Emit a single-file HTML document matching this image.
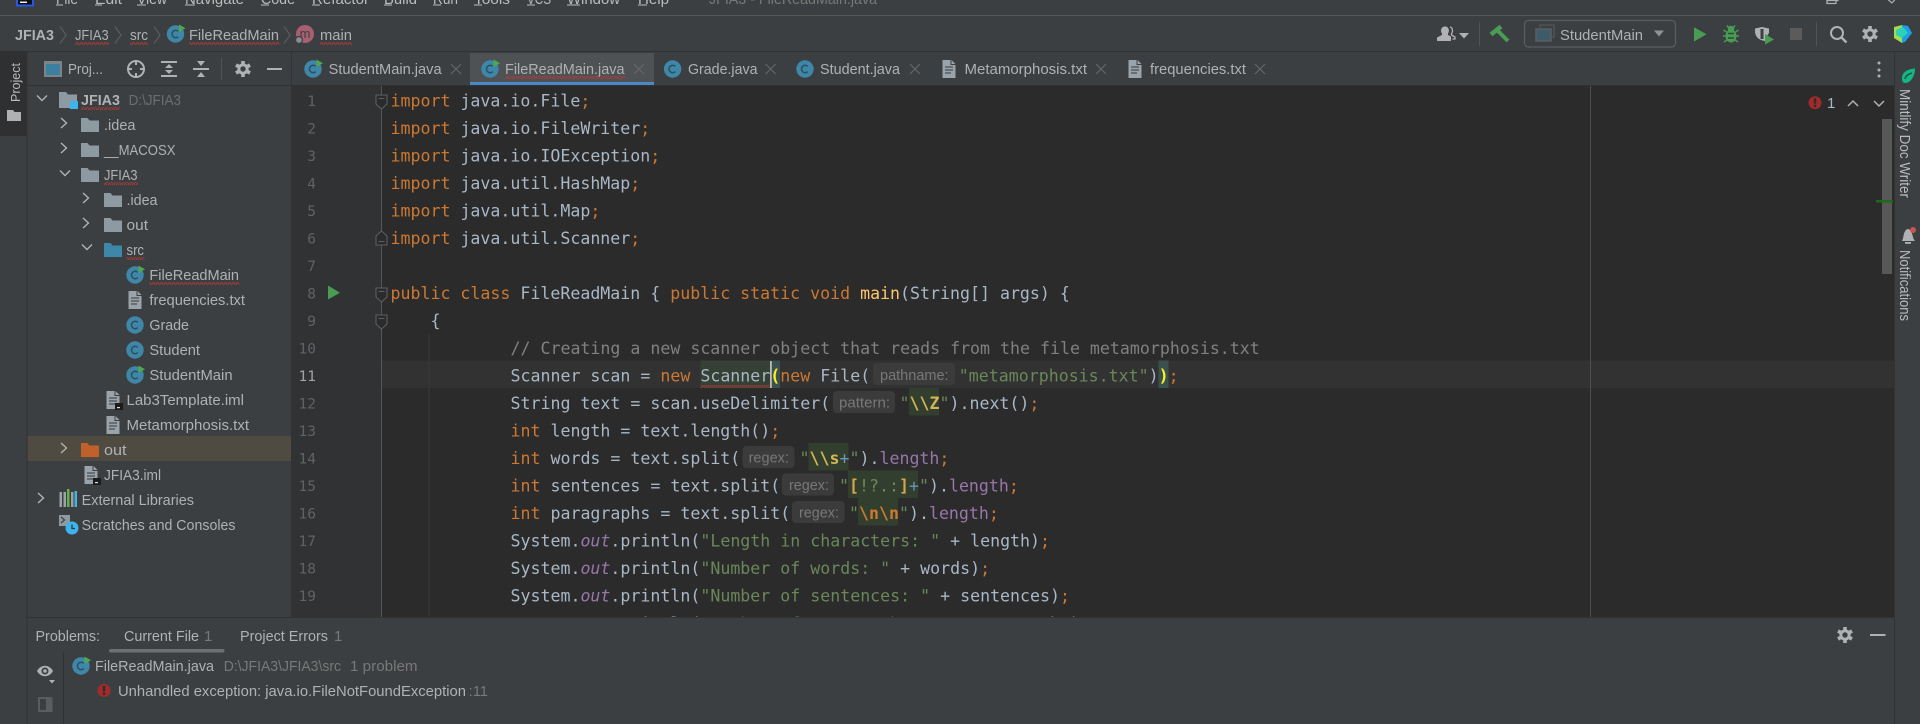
<!DOCTYPE html>
<html><head><meta charset="utf-8"><title>FileReadMain.java</title>
<style>
html,body{margin:0;padding:0;background:#3c3f41;overflow:hidden}
svg{display:block}
text{white-space:pre}
.u{font-family:"Liberation Sans",sans-serif;font-size:15px;fill:#afb1b3}
.b{font-weight:700}
.g{fill:#787878}
.h{font-family:"Liberation Sans",sans-serif;font-size:15px;fill:#787878}
.c{font-family:"DejaVu Sans Mono","Liberation Mono",monospace;font-size:16.6px;fill:#a9b7c6}
.n{font-family:"DejaVu Sans Mono","Liberation Mono",monospace;font-size:14.5px;fill:#606366;text-anchor:end}
.k{fill:#cc7832}.s{fill:#6a8759}.f{fill:#9876aa}.o{fill:#9876aa;font-style:italic}.m{fill:#808080}
.y{fill:#ffef28;font-weight:700}.r1{fill:#d2b655;font-weight:700}.r2{fill:#6897bb}.r3{fill:#d6a44c;font-weight:700}.r4{fill:#cc7832;font-weight:700}.fn{fill:#ffc66d}
</style></head><body>
<svg xmlns="http://www.w3.org/2000/svg" width="1920" height="724" viewBox="0 0 1920 724">
<defs>
<pattern id="w" width="4" height="3" patternUnits="userSpaceOnUse"><path d="M0 2.4L1 .6H2L3 2.4H4" fill="none" stroke="#b23a36" stroke-width=".9"/></pattern>
<clipPath id="ed"><rect x="291" y="86" width="1603" height="531"/></clipPath>
<symbol id="cl" overflow="visible"><circle r="8.7" fill="#3f87a8"/><path d="M2.8-2.6A3.7 3.7 0 1 0 2.8 2.6" fill="none" stroke="#2c4f60" stroke-width="1.5"/></symbol>
<symbol id="rn" overflow="visible"><path d="M3.5-9.5L10-5.8 3.5-2z" fill="#4fa84f"/></symbol>
<symbol id="tx" overflow="visible"><path d="M-6.5-9H1.500V-4H6.500V9H-6.500zM2.500-9L6.500-5H2.500z" fill="#9aa3a9"/><path d="M-4-2H4M-4 1H4M-4 4H2" stroke="#4b5054" stroke-width="1.2"/></symbol>
<symbol id="fd" overflow="visible"><path d="M0 0H6.500L8.500 2.500H18V14H0z" fill="#8e9aa2"/></symbol>
<symbol id="cr" overflow="visible"><path d="M-3-5L2.500 0-3 5" fill="none" stroke="#b0b3b5" stroke-width="1.4"/></symbol>
<symbol id="cd" overflow="visible"><path d="M-5-2.500L0 2.500 5-2.500" fill="none" stroke="#b0b3b5" stroke-width="1.4"/></symbol>
<symbol id="nv" overflow="visible"><path d="M-3-8.500L3 0-3 8.500" fill="none" stroke="#5f6365" stroke-width="1"/></symbol>
<symbol id="x" overflow="visible"><path d="M-5-5L5 5M5-5L-5 5" stroke="#63676a" stroke-width="1.2"/></symbol>
<symbol id="gr" overflow="visible"><path d="M0-8V8M-7-4L7 4M7-4L-7 4" stroke="#afb1b3" stroke-width="3.6"/><circle r="5.600" fill="#afb1b3"/><circle r="2.700" fill="#3c3f41"/></symbol>
<symbol id="fo" overflow="visible"><path d="M-5.500-7H5.500V2L0 7-5.500 2z" fill="#2b2b2b" stroke="#5c5f60" stroke-width="1.100"/><path d="M-3-3.500H3" stroke="#5c5f60" stroke-width="1.100"/></symbol>
<symbol id="fu" overflow="visible"><path d="M-5.500 7H5.500V-2L0-7-5.500-2z" fill="#2b2b2b" stroke="#5c5f60" stroke-width="1.100"/><path d="M-3 3.500H3" stroke="#5c5f60" stroke-width="1.100"/></symbol>
<symbol id="er" overflow="visible"><circle r="6.500" fill="#a32a2a"/><rect x="-1.200" y="-4.500" width="2.400" height="5.500" fill="#2d2d2d"/><rect x="-1.200" y="2" width="2.400" height="2.400" fill="#2d2d2d"/></symbol>
</defs>

<rect width="1920" height="724" fill="#3c3f41"/>

<!-- menu bar -->
<rect x="16" y="0" width="18" height="6.500" fill="#2657e8"/><rect x="18" y="0" width="14" height="4.500" fill="#111"/><rect x="20" y="1.500" width="7" height="1.500" fill="#eee"/>
<g class="menu">
<text class="u" x="56" y="4" textLength="22" lengthAdjust="spacingAndGlyphs" style="fill:#bbb">File</text>
<text class="u" x="95" y="4" textLength="27" lengthAdjust="spacingAndGlyphs" style="fill:#bbb">Edit</text>
<text class="u" x="137" y="4" textLength="30" lengthAdjust="spacingAndGlyphs" style="fill:#bbb">View</text>
<text class="u" x="185" y="4" textLength="59" lengthAdjust="spacingAndGlyphs" style="fill:#bbb">Navigate</text>
<text class="u" x="261" y="4" textLength="34" lengthAdjust="spacingAndGlyphs" style="fill:#bbb">Code</text>
<text class="u" x="312" y="4" textLength="57" lengthAdjust="spacingAndGlyphs" style="fill:#bbb">Refactor</text>
<text class="u" x="384" y="4" textLength="33" lengthAdjust="spacingAndGlyphs" style="fill:#bbb">Build</text>
<text class="u" x="433" y="4" textLength="25" lengthAdjust="spacingAndGlyphs" style="fill:#bbb">Run</text>
<text class="u" x="474" y="4" textLength="36" lengthAdjust="spacingAndGlyphs" style="fill:#bbb">Tools</text>
<text class="u" x="527" y="4" textLength="24" lengthAdjust="spacingAndGlyphs" style="fill:#bbb">VCS</text>
<text class="u" x="567" y="4" textLength="53" lengthAdjust="spacingAndGlyphs" style="fill:#bbb">Window</text>
<text class="u" x="638" y="4" textLength="31" lengthAdjust="spacingAndGlyphs" style="fill:#bbb">Help</text>
<path d="M56 5h7M95 5h7M137 5h9M185 5h10M261 5h8M312 5h8M384 5h8M433 5h8M474 5h8M527 5h8M567 5h13M638 5h9" stroke="#bbb" stroke-width="1"/>
<text class="u g" x="709" y="4" textLength="168" lengthAdjust="spacingAndGlyphs">JFIA3 - FileReadMain.java</text>
</g>
<path d="M1827 4V.5H1838V-3" fill="none" stroke="#afb1b3" stroke-width="1.200"/><rect x="1827" y="-3" width="9" height="6.500" fill="none" stroke="#afb1b3" stroke-width="1.200"/>
<path d="M1885-3L1892 3M1897-3L1892 3" stroke="#afb1b3" stroke-width="1.200" fill="none"/>
<rect x="0" y="15" width="1920" height="1" fill="#54575a"/>

<!-- navigation bar -->
<text class="u b" x="15" y="40" textLength="39" lengthAdjust="spacingAndGlyphs">JFIA3</text>
<use href="#nv" x="63" y="35"/>
<text class="u" x="75" y="40" textLength="33.600" lengthAdjust="spacingAndGlyphs">JFIA3</text>
<rect x="75" y="42" width="34" height="3" fill="url(#w)"/>
<use href="#nv" x="118" y="35"/>
<text class="u" x="130" y="40" textLength="18" lengthAdjust="spacingAndGlyphs">src</text>
<rect x="130" y="42" width="18" height="3" fill="url(#w)"/>
<use href="#nv" x="157" y="35"/>
<use href="#cl" x="175.500" y="34"/><use href="#rn" x="175.500" y="34"/>
<text class="u" x="189" y="40" textLength="90" lengthAdjust="spacingAndGlyphs">FileReadMain</text>
<rect x="189" y="42" width="90" height="3" fill="url(#w)"/>
<use href="#nv" x="287" y="35"/>
<circle cx="305" cy="34" r="9" fill="#a85f72"/>
<text x="305" y="38" text-anchor="middle" style="font-family:'Liberation Sans',sans-serif;font-size:13px;fill:#3c3f41">m</text>
<circle cx="299" cy="40" r="3.500" fill="#8b8e90" stroke="#3c3f41" stroke-width="1.200"/>
<text class="u" x="320" y="40" textLength="32" lengthAdjust="spacingAndGlyphs">main</text>
<rect x="320" y="42" width="32" height="3" fill="url(#w)"/>

<!-- toolbar right -->
<path d="M1437 41V37.500L1442 35V33.500C1440.500 32 1440.500 26.500 1445 26.500C1449.500 26.500 1449.500 32 1448 33.500V35L1451 36.500V41z" fill="#afb1b3"/>
<path d="M1450 27C1453 27.500 1453 32 1451.500 33.500V35L1455 37V39H1452.500" fill="none" stroke="#afb1b3" stroke-width="1.300"/>
<path d="M1459 33H1469L1464 38.500z" fill="#afb1b3"/>
<rect x="1479" y="22" width="1" height="24" fill="#515456"/>
<path d="M1491 34.500L1501 26.500" stroke="#499c54" stroke-width="4.500"/><path d="M1497 30L1508 41" stroke="#499c54" stroke-width="4"/>
<rect x="1524.500" y="20.500" width="151" height="26.500" rx="4" fill="none" stroke="#5a5e60" stroke-width="1.200"/>
<rect x="1540" y="25" width="14" height="12" fill="none" stroke="#55585a" stroke-width="1.200"/>
<rect x="1536" y="29" width="15" height="12" fill="#3e5b69" stroke="#5a5e60" stroke-width="1.500"/>
<text class="u" x="1560" y="40" textLength="83" lengthAdjust="spacingAndGlyphs">StudentMain</text>
<path d="M1654 30.500H1664L1659 36.500z" fill="#8f9193"/>
<path d="M1694 27.300L1706.500 34.300 1694 41.500z" fill="#499c54"/>
<g fill="#499c54"><ellipse cx="1731" cy="36" rx="5.500" ry="6.500"/><circle cx="1731" cy="29" r="3.200"/></g>
<path d="M1723.500 30L1726.500 32M1738.500 30L1735.500 32M1723 36H1726M1736 36H1739M1724 42L1727 40M1738 42L1735 40M1727 25.500L1728.500 27.500M1735 25.500L1733.500 27.500" stroke="#499c54" stroke-width="1.500"/>
<path d="M1728 33.500H1734M1728 38H1734" stroke="#2f4a33" stroke-width="1.500"/>
<path d="M1755 28.500L1762 27 1769 28.500V33L1765 38.500V41C1758 40 1755 36 1755 31z" fill="#afb1b3"/><path d="M1762 29V39" stroke="#3c3f41" stroke-width="3"/>
<path d="M1765 34L1774 39.500 1765 44.500z" fill="#499c54"/>
<rect x="1790" y="28" width="12" height="12" fill="#5b5b5b"/>
<rect x="1816" y="22" width="1" height="24" fill="#515456"/>
<circle cx="1837" cy="33" r="6" fill="none" stroke="#afb1b3" stroke-width="2"/><path d="M1841.500 37.500L1846.500 42.500" stroke="#afb1b3" stroke-width="2.400"/>
<use href="#gr" x="1870" y="34"/>
<path d="M1894 27L1902 25V43L1894 38z" fill="#a8d94a"/><path d="M1902 25L1908 26 1912 33 1905 42 1902 43z" fill="#1aa0e8"/><path d="M1896 30L1903 27 1908 33 1902 38 1896 35z" fill="#2fd0b8"/>
<rect x="0" y="51" width="1920" height="1" fill="#323232"/>

<!-- left stripe -->
<rect x="0" y="52" width="26.500" height="84" fill="#2e3032"/>
<rect x="26.500" y="52" width="1" height="672" fill="#323232"/>
<text class="u" transform="translate(20 102) rotate(-90)" x="0" y="0" textLength="39" lengthAdjust="spacingAndGlyphs" style="font-size:13px;fill:#bbb">Project</text>
<path d="M7 110H13L14.500 112H21V121H7z" fill="#afb1b3"/>

<!-- project header -->
<rect x="44" y="61" width="18" height="16" fill="#7c8488"/><rect x="46" y="64" width="14" height="11" fill="#3d7f9e"/>
<text class="u" x="68" y="74" textLength="35" lengthAdjust="spacingAndGlyphs">Proj...</text>
<circle cx="136" cy="69" r="8" fill="none" stroke="#afb1b3" stroke-width="2"/><path d="M136 60V65M136 73V78M127 69H132M140 69H145" stroke="#afb1b3" stroke-width="2"/>
<path d="M161 62H177M161 76H177" stroke="#afb1b3" stroke-width="2"/><path d="M165 68L169 64 173 68zM165 70H173L169 74z" fill="#afb1b3"/>
<path d="M193 69H209" stroke="#afb1b3" stroke-width="2"/><path d="M197 61H205L201 66zM197 77H205L201 72z" fill="#afb1b3"/>
<rect x="221" y="58" width="1" height="22" fill="#515456"/>
<use href="#gr" x="243" y="69"/>
<rect x="267" y="68" width="15" height="2" fill="#afb1b3"/>
<rect x="27.500" y="85" width="264" height="1" fill="#323232"/>

<!-- tree -->
<rect x="27.500" y="436" width="263.500" height="25" fill="#4f4b41"/>
<use href="#cd" x="42" y="98"/>
<path d="M59 92H66L68 94.500H77V108H59z" fill="#8e9aa2"/><rect x="70" y="101" width="8" height="8" fill="#3db4ee"/>
<text class="u b" x="81" y="105" textLength="39" lengthAdjust="spacingAndGlyphs">JFIA3</text><rect x="81" y="107" width="39" height="3" fill="url(#w)"/>
<text class="u g" x="128.600" y="105" textLength="52.400" lengthAdjust="spacingAndGlyphs" style="fill:#6b6e70">D:\JFIA3</text>

<use href="#cr" x="64" y="123"/><use href="#fd" x="81" y="118"/>
<text class="u" x="104" y="130" textLength="31.500" lengthAdjust="spacingAndGlyphs">.idea</text>
<use href="#cr" x="64" y="148"/><use href="#fd" x="81" y="143"/>
<text class="u" x="104" y="155" textLength="71.500" lengthAdjust="spacingAndGlyphs">__MACOSX</text>
<use href="#cd" x="65" y="173"/><use href="#fd" x="81" y="168"/>
<text class="u" x="104" y="180" textLength="33.500" lengthAdjust="spacingAndGlyphs">JFIA3</text><rect x="104" y="182" width="34" height="3" fill="url(#w)"/>
<use href="#cr" x="86" y="198"/><use href="#fd" x="104" y="193"/>
<text class="u" x="126.500" y="205" textLength="31" lengthAdjust="spacingAndGlyphs">.idea</text>
<use href="#cr" x="86" y="223"/><use href="#fd" x="104" y="218"/>
<text class="u" x="126.500" y="230" textLength="21.500" lengthAdjust="spacingAndGlyphs">out</text>
<use href="#cd" x="87" y="247"/><path d="M104 243H110.500L112.500 245.500H122V257H104z" fill="#3d88a8"/>
<text class="u" x="126.500" y="255" textLength="17.500" lengthAdjust="spacingAndGlyphs">src</text><rect x="126.500" y="257" width="18" height="3" fill="url(#w)"/>
<use href="#cl" x="135" y="275"/><use href="#rn" x="135" y="275"/>
<text class="u" x="149.400" y="280" textLength="89.600" lengthAdjust="spacingAndGlyphs">FileReadMain</text><rect x="149.400" y="282" width="90" height="3" fill="url(#w)"/>
<use href="#tx" x="135" y="300"/>
<text class="u" x="149.400" y="305" textLength="95.600" lengthAdjust="spacingAndGlyphs">frequencies.txt</text>
<use href="#cl" x="135" y="325"/>
<text class="u" x="149.400" y="330" textLength="39.600" lengthAdjust="spacingAndGlyphs">Grade</text>
<use href="#cl" x="135" y="350"/>
<text class="u" x="149.400" y="355" textLength="50.600" lengthAdjust="spacingAndGlyphs">Student</text>
<use href="#cl" x="135" y="375"/><use href="#rn" x="135" y="375"/>
<text class="u" x="149.400" y="380" textLength="83.200" lengthAdjust="spacingAndGlyphs">StudentMain</text>
<use href="#tx" x="113" y="400"/><rect x="115" y="403" width="8" height="7" fill="#1c1c1c"/><rect x="117" y="407" width="3" height="1.200" fill="#ddd"/>
<text class="u" x="126.500" y="405" textLength="117.500" lengthAdjust="spacingAndGlyphs">Lab3Template.iml</text>
<use href="#tx" x="113" y="425"/>
<text class="u" x="126.500" y="430" textLength="122.500" lengthAdjust="spacingAndGlyphs">Metamorphosis.txt</text>
<use href="#cr" x="64" y="448"/><path d="M81 443H87.500L89.500 445.500H99V457H81z" fill="#c0602a"/>
<text class="u" x="104" y="455" textLength="22.500" lengthAdjust="spacingAndGlyphs">out</text>
<use href="#tx" x="91" y="475"/><rect x="93" y="478" width="8" height="7" fill="#1c1c1c"/><rect x="95" y="482" width="3" height="1.200" fill="#ddd"/>
<text class="u" x="104" y="480" textLength="57" lengthAdjust="spacingAndGlyphs">JFIA3.iml</text>
<use href="#cr" x="41" y="498"/>
<g><rect x="59.500" y="492" width="2.500" height="15" fill="#9aa3a9"/><rect x="63.500" y="492" width="2.500" height="15" fill="#9aa3a9"/><rect x="67" y="489" width="2.500" height="18" fill="#62b543"/><rect x="71" y="492" width="2.500" height="15" fill="#9aa3a9"/><rect x="74.500" y="491" width="2.500" height="16" fill="#40b6e0"/></g>
<text class="u" x="81.600" y="505" textLength="112.400" lengthAdjust="spacingAndGlyphs">External Libraries</text>
<rect x="59" y="515" width="11" height="11" fill="#8e9aa2"/><path d="M61 517L64.500 520 61 523" fill="none" stroke="#3c3f41" stroke-width="1.200"/>
<circle cx="72" cy="528" r="6.500" fill="#3db4ee"/><path d="M72 524.500V528.500H75" fill="none" stroke="#2b3a44" stroke-width="1.300"/>
<text class="u" x="81.600" y="530" textLength="153.900" lengthAdjust="spacingAndGlyphs">Scratches and Consoles</text>

<rect x="291" y="52" width="1" height="566" fill="#323232"/>

<!-- tabs -->
<rect x="470" y="53" width="184" height="29" fill="#4e5254"/>
<rect x="470" y="82" width="184" height="3.500" fill="#4a88c7"/>
<use href="#cl" x="313" y="69"/><use href="#rn" x="313" y="69"/>
<text class="u" x="328.600" y="74" textLength="113" lengthAdjust="spacingAndGlyphs">StudentMain.java</text><use href="#x" x="456" y="69"/>
<use href="#cl" x="490" y="69"/><use href="#rn" x="490" y="69"/>
<text class="u" x="505" y="74" textLength="119.500" lengthAdjust="spacingAndGlyphs">FileReadMain.java</text><rect x="505" y="76" width="120" height="3" fill="url(#w)"/><use href="#x" x="639" y="69"/>
<use href="#cl" x="672.600" y="69"/>
<text class="u" x="688" y="74" textLength="69.500" lengthAdjust="spacingAndGlyphs">Grade.java</text><use href="#x" x="770.600" y="69"/>
<use href="#cl" x="805" y="69"/>
<text class="u" x="820" y="74" textLength="80" lengthAdjust="spacingAndGlyphs">Student.java</text><use href="#x" x="915" y="69"/>
<use href="#tx" x="949" y="69"/>
<text class="u" x="964.500" y="74" textLength="122.500" lengthAdjust="spacingAndGlyphs">Metamorphosis.txt</text><use href="#x" x="1101" y="69"/>
<use href="#tx" x="1135" y="69"/>
<text class="u" x="1150" y="74" textLength="96" lengthAdjust="spacingAndGlyphs">frequencies.txt</text><use href="#x" x="1260" y="69"/>
<circle cx="1879" cy="63" r="1.500" fill="#afb1b3"/><circle cx="1879" cy="70" r="1.500" fill="#afb1b3"/><circle cx="1879" cy="76" r="1.500" fill="#afb1b3"/>
<rect x="292" y="85" width="1602" height="1" fill="#323232"/>

<!-- editor -->
<rect x="292" y="86" width="90" height="531" fill="#303234"/>
<rect x="382" y="86" width="1512" height="531" fill="#2b2b2b"/>
<rect x="382" y="360.500" width="1512" height="27.500" fill="#323232"/>
<rect x="381" y="86" width="1" height="531" fill="#555"/>
<rect x="1590" y="86" width="1" height="531" fill="#4f4f4f"/>
<rect x="428.500" y="334" width="1" height="283" fill="#383838"/>
<rect x="700.500" y="360.500" width="69.500" height="27.500" fill="#344134"/>
<rect x="770" y="360.500" width="10" height="27.500" fill="#3b514d"/>
<rect x="1158.500" y="360.500" width="10" height="27.500" fill="#3b514d"/>
<rect x="873" y="363" width="82" height="22" rx="4" fill="#3b3b3b"/>
<rect x="833" y="391" width="62" height="22" rx="4" fill="#3b3b3b"/>
<rect x="742.500" y="446" width="52" height="22" rx="4" fill="#3b3b3b"/>
<rect x="782" y="473.500" width="52" height="22" rx="4" fill="#3b3b3b"/>
<rect x="792" y="501" width="52.500" height="22" rx="4" fill="#3b3b3b"/>
<rect x="909" y="388" width="30" height="27.500" fill="#333f2e"/>
<rect x="808.500" y="443" width="40" height="27.500" fill="#333f2e"/>
<rect x="848" y="470.500" width="70" height="27.500" fill="#333f2e"/>
<rect x="858" y="498" width="40" height="27.500" fill="#333f2e"/>

<g>
<text class="n" x="316" y="106">1</text><text class="n" x="316" y="133.500">2</text><text class="n" x="316" y="161">3</text><text class="n" x="316" y="188.500">4</text><text class="n" x="316" y="216">5</text><text class="n" x="316" y="243.500">6</text><text class="n" x="316" y="271">7</text><text class="n" x="316" y="298.500">8</text><text class="n" x="316" y="326">9</text><text class="n" x="316" y="353.500">10</text><text class="n" x="316" y="381" style="fill:#a4a3a3">11</text><text class="n" x="316" y="408.500">12</text><text class="n" x="316" y="436">13</text><text class="n" x="316" y="463.500">14</text><text class="n" x="316" y="491">15</text><text class="n" x="316" y="518.500">16</text><text class="n" x="316" y="546">17</text><text class="n" x="316" y="573.500">18</text><text class="n" x="316" y="601">19</text>
</g>
<path d="M328 285.500L340 292.700 328 299.500z" fill="#499c54"/>
<use href="#fo" x="381.500" y="102"/><use href="#fu" x="381.500" y="238"/><use href="#fo" x="381.500" y="295"/><use href="#fo" x="381.500" y="322"/>

<g clip-path="url(#ed)">
<text class="c" x="390.500" y="106.500"><tspan class="k">import</tspan> java.io.File<tspan class="k">;</tspan></text>
<text class="c" x="390.500" y="134"><tspan class="k">import</tspan> java.io.FileWriter<tspan class="k">;</tspan></text>
<text class="c" x="390.500" y="161.500"><tspan class="k">import</tspan> java.io.IOException<tspan class="k">;</tspan></text>
<text class="c" x="390.500" y="189"><tspan class="k">import</tspan> java.util.HashMap<tspan class="k">;</tspan></text>
<text class="c" x="390.500" y="216.500"><tspan class="k">import</tspan> java.util.Map<tspan class="k">;</tspan></text>
<text class="c" x="390.500" y="244"><tspan class="k">import</tspan> java.util.Scanner<tspan class="k">;</tspan></text>
<text class="c" x="390.500" y="299"><tspan class="k">public class</tspan> FileReadMain { <tspan class="k">public static void</tspan> <tspan class="fn">main</tspan>(String[] args) {</text>
<text class="c" x="430.500" y="326.500">{</text>
<text class="c m" x="510.500" y="354" style="fill:#808080">// Creating a new scanner object that reads from the file metamorphosis.txt</text>
<text class="c" x="510.500" y="381.500">Scanner scan = <tspan class="k">new</tspan> Scanner<tspan class="y">(</tspan><tspan class="k">new</tspan> File(</text>
<text class="h" x="880" y="380" textLength="68.600" lengthAdjust="spacingAndGlyphs">pathname:</text>
<text class="c" x="958.800" y="381.500"><tspan class="s">"metamorphosis.txt"</tspan>)<tspan class="y">)</tspan><tspan class="k">;</tspan></text>
<text class="c" x="510.500" y="409">String text = scan.useDelimiter(</text>
<text class="h" x="839" y="407.500" textLength="51" lengthAdjust="spacingAndGlyphs">pattern:</text>
<text class="c" x="899.500" y="409"><tspan class="s">"</tspan><tspan class="r1">\\Z</tspan><tspan class="s">"</tspan>).next()<tspan class="k">;</tspan></text>
<text class="c" x="510.500" y="436.500"><tspan class="k">int</tspan> length = text.length()<tspan class="k">;</tspan></text>
<text class="c" x="510.500" y="464"><tspan class="k">int</tspan> words = text.split(</text>
<text class="h" x="748.600" y="462.500" textLength="40.400" lengthAdjust="spacingAndGlyphs">regex:</text>
<text class="c" x="799.500" y="464"><tspan class="s">"</tspan><tspan class="r1">\\s</tspan><tspan class="r2">+</tspan><tspan class="s">"</tspan>).<tspan class="f">length</tspan><tspan class="k">;</tspan></text>
<text class="c" x="510.500" y="491.500"><tspan class="k">int</tspan> sentences = text.split(</text>
<text class="h" x="789" y="490" textLength="40" lengthAdjust="spacingAndGlyphs">regex:</text>
<text class="c" x="839" y="491.500"><tspan class="s">"</tspan><tspan class="r3">[</tspan><tspan class="s">!?.:</tspan><tspan class="r3">]</tspan><tspan class="r2">+</tspan><tspan class="s">"</tspan>).<tspan class="f">length</tspan><tspan class="k">;</tspan></text>
<text class="c" x="510.500" y="519"><tspan class="k">int</tspan> paragraphs = text.split(</text>
<text class="h" x="799" y="517.500" textLength="40" lengthAdjust="spacingAndGlyphs">regex:</text>
<text class="c" x="849" y="519"><tspan class="s">"</tspan><tspan class="r4">\n\n</tspan><tspan class="s">"</tspan>).<tspan class="f">length</tspan><tspan class="k">;</tspan></text>
<text class="c" x="510.500" y="546.500">System.<tspan class="o">out</tspan>.println(<tspan class="s">"Length in characters: "</tspan> + length)<tspan class="k">;</tspan></text>
<text class="c" x="510.500" y="574">System.<tspan class="o">out</tspan>.println(<tspan class="s">"Number of words: "</tspan> + words)<tspan class="k">;</tspan></text>
<text class="c" x="510.500" y="601.500">System.<tspan class="o">out</tspan>.println(<tspan class="s">"Number of sentences: "</tspan> + sentences)<tspan class="k">;</tspan></text>
<text class="c" x="510.500" y="629.500">System.<tspan class="o">out</tspan>.println(<tspan class="s">"Number of paragraphs: "</tspan> + paragraphs)<tspan class="k">;</tspan></text>
</g>
<rect x="700.500" y="385" width="69.500" height="3" fill="url(#w)"/>
<rect x="770" y="361" width="1.800" height="27" fill="#bbbbbb"/>

<!-- inspection widget + scrollbar -->
<use href="#er" x="1815" y="102.700"/>
<text class="u" x="1827" y="108" style="fill:#a9b7c6">1</text>
<path d="M1848 106L1853 101 1858 106M1874 101L1879 106 1884 101" fill="none" stroke="#afb1b3" stroke-width="1.500"/>
<rect x="1882" y="119" width="10" height="155" fill="#575858"/>
<rect x="1876" y="200" width="17" height="2.500" fill="#1d6a1d"/>

<!-- right stripe -->
<rect x="1894" y="52" width="26" height="672" fill="#3c3f41"/>
<rect x="1894" y="52" width="1" height="672" fill="#323232"/>
<path d="M1902 78C1902 72 1908 69 1915 68.500C1915 74 1912 83 1905 83C1903 83 1902 81 1902 78z" fill="#0fb981"/><path d="M1905 79C1906 75 1909 74 1912 73" stroke="#2c4f46" stroke-width="1.500" fill="none"/>
<text class="u" transform="translate(1900 89) rotate(90)" x="0" y="0" textLength="109" lengthAdjust="spacingAndGlyphs" style="font-size:14.500px;fill:#bbb">Mintlify Doc Writer</text>
<path d="M1902 241C1904 238 1903 230 1908 229C1913 230 1912 238 1915 241z" fill="#afb1b3"/><rect x="1905" y="242" width="6" height="1.800" fill="#afb1b3"/>
<circle cx="1913" cy="230" r="3" fill="#c75450"/>
<text class="u" transform="translate(1900 250) rotate(90)" x="0" y="0" textLength="71" lengthAdjust="spacingAndGlyphs" style="font-size:14.500px;fill:#bbb">Notifications</text>

<!-- problems panel -->
<rect x="27.500" y="617" width="1866.500" height="1" fill="#323232"/>
<text class="u" x="35.500" y="641" textLength="64.500" lengthAdjust="spacingAndGlyphs">Problems:</text>
<text class="u" x="124" y="641" textLength="75" lengthAdjust="spacingAndGlyphs">Current File</text><text class="u g" x="204" y="641">1</text>
<rect x="109" y="649" width="115.500" height="3.500" rx="1.700" fill="#6c7072"/>
<text class="u" x="240" y="641" textLength="88" lengthAdjust="spacingAndGlyphs">Project Errors</text><text class="u g" x="334" y="641">1</text>
<use href="#gr" x="1845" y="635"/>
<rect x="1870" y="634" width="15.500" height="2" fill="#afb1b3"/>
<rect x="63" y="652" width="1" height="72" fill="#323232"/>
<path d="M37 671C41 664 49 664 53 671C49 678 41 678 37 671z" fill="#afb1b3"/><circle cx="45" cy="671" r="3.500" fill="#3c3f41"/><circle cx="45" cy="671" r="1.800" fill="#afb1b3"/>
<path d="M49 680H55L52 683.500z" fill="#afb1b3"/>
<rect x="38" y="697" width="14.500" height="15" fill="#5a5d5f"/><rect x="40" y="699" width="6" height="11" fill="#3c3f41"/>
<use href="#cl" x="81" y="666"/><use href="#rn" x="81" y="666"/>
<text class="u" x="95" y="671" textLength="119" lengthAdjust="spacingAndGlyphs">FileReadMain.java</text>
<text class="u g" x="223.700" y="671" textLength="117.300" lengthAdjust="spacingAndGlyphs">D:\JFIA3\JFIA3\src</text>
<text class="u g" x="350" y="671" textLength="67.600" lengthAdjust="spacingAndGlyphs">1 problem</text>
<use href="#er" x="104" y="690.500"/>
<text class="u" x="118" y="696" textLength="348" lengthAdjust="spacingAndGlyphs">Unhandled exception: java.io.FileNotFoundException</text>
<text class="u g" x="468.600" y="696" textLength="19.400" lengthAdjust="spacingAndGlyphs">:11</text>
</svg>
</body></html>
